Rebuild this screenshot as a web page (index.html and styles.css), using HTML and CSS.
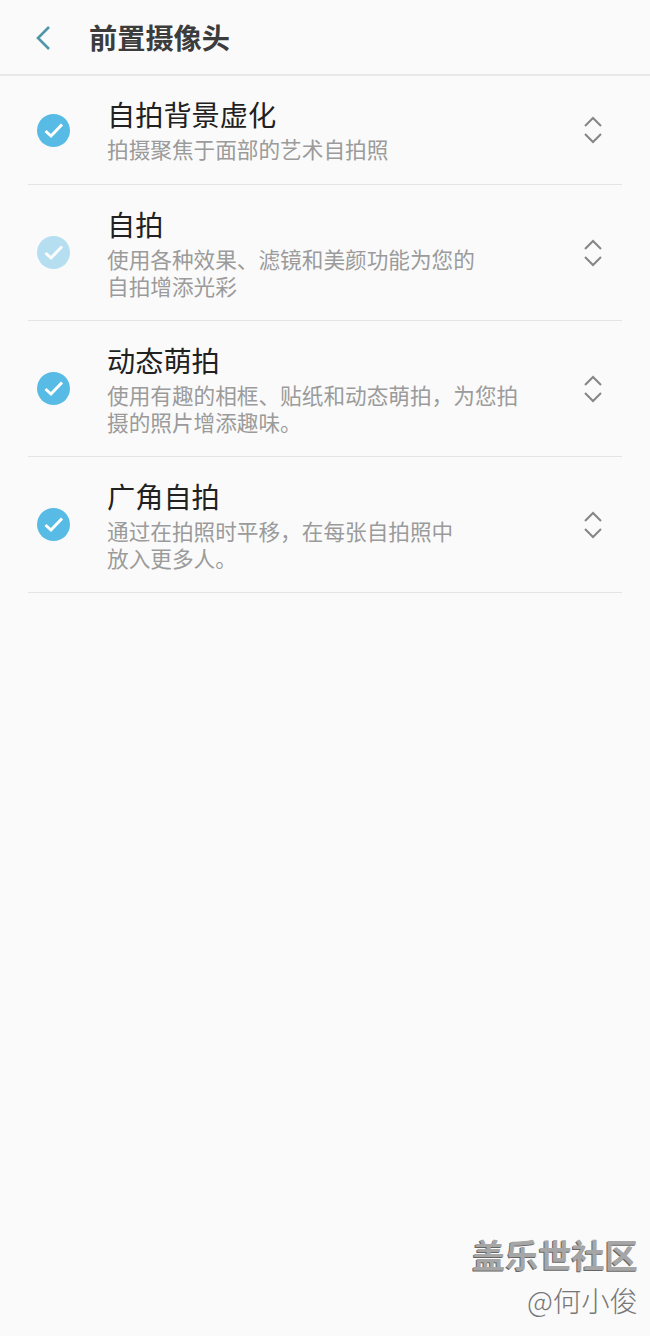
FILE: index.html
```html
<!DOCTYPE html>
<html lang="zh-CN">
<head>
    <meta charset="UTF-8">
    <meta name="viewport" content="width=device-width, initial-scale=1.0">
    <title>前置摄像头</title>
    <link rel="stylesheet" href="styles.css">
</head>
<body>
    <header class="top-bar">
        <svg class="back-icon" width="16" height="26" viewBox="0 0 16 26">
            <path d="M14 2 L3 13 L14 24" />
        </svg>
        <h1>前置摄像头</h1>
    </header>

    <ul class="mode-list">
        <li class="mode-row first">
            <svg class="check" width="33" height="33" viewBox="0 0 33 33">
                <circle cx="16.5" cy="16.5" r="16.5" />
                <path d="M8.5 17 L14 22 L25 10.5" />
            </svg>
            <div class="mode-text">
                <div class="mode-title">自拍背景虚化</div>
                <div class="mode-desc">拍摄聚焦于面部的艺术自拍照</div>
            </div>
            <svg class="reorder" width="20" height="28" viewBox="0 0 20 28">
                <path d="M2 10 L10 2 L18 10" />
                <path d="M2 18 L10 26 L18 18" />
            </svg>
        </li>
        <li class="mode-row">
            <svg class="check locked" width="33" height="33" viewBox="0 0 33 33">
                <circle cx="16.5" cy="16.5" r="16.5" />
                <path d="M8.5 17 L14 22 L25 10.5" />
            </svg>
            <div class="mode-text">
                <div class="mode-title">自拍</div>
                <div class="mode-desc">使用各种效果、滤镜和美颜功能为您的<br>自拍增添光彩</div>
            </div>
            <svg class="reorder" width="20" height="28" viewBox="0 0 20 28">
                <path d="M2 10 L10 2 L18 10" />
                <path d="M2 18 L10 26 L18 18" />
            </svg>
        </li>
        <li class="mode-row">
            <svg class="check" width="33" height="33" viewBox="0 0 33 33">
                <circle cx="16.5" cy="16.5" r="16.5" />
                <path d="M8.5 17 L14 22 L25 10.5" />
            </svg>
            <div class="mode-text">
                <div class="mode-title">动态萌拍</div>
                <div class="mode-desc">使用有趣的相框、贴纸和动态萌拍，为您拍<br>摄的照片增添趣味。</div>
            </div>
            <svg class="reorder" width="20" height="28" viewBox="0 0 20 28">
                <path d="M2 10 L10 2 L18 10" />
                <path d="M2 18 L10 26 L18 18" />
            </svg>
        </li>
        <li class="mode-row">
            <svg class="check" width="33" height="33" viewBox="0 0 33 33">
                <circle cx="16.5" cy="16.5" r="16.5" />
                <path d="M8.5 17 L14 22 L25 10.5" />
            </svg>
            <div class="mode-text">
                <div class="mode-title">广角自拍</div>
                <div class="mode-desc">通过在拍照时平移，在每张自拍照中<br>放入更多人。</div>
            </div>
            <svg class="reorder" width="20" height="28" viewBox="0 0 20 28">
                <path d="M2 10 L10 2 L18 10" />
                <path d="M2 18 L10 26 L18 18" />
            </svg>
        </li>
    </ul>

    <div class="watermark">
        <div class="watermark-site">盖乐世社区</div>
        <div class="watermark-user">@何小俊</div>
    </div>
</body>
</html>
```

FILE: styles.css
```css
* {
    box-sizing: border-box;
    margin: 0;
    padding: 0;
}

body {
    position: relative;
    height: 1336px;
    overflow: hidden;
    font-family: "Noto Sans CJK SC", "Noto Sans", sans-serif;
    background-color: #fafafa;
    color: #212121;
}

.top-bar {
    display: flex;
    align-items: center;
    height: 76px;
    padding-left: 35px;
    padding-top: 1px;
    border-bottom: 2px solid #e8e8e8;
}

.back-icon {
    margin-right: 38px;
}

.back-icon path {
    fill: none;
    stroke: #4f97a8;
    stroke-width: 2.6;
}

h1 {
    font-size: 28.2px;
    font-weight: 700;
    line-height: 1;
    color: #3c3c3c;
}

.mode-list {
    list-style: none;
    margin: 0 28px;
}

.mode-row {
    display: flex;
    align-items: center;
    height: 136px;
    padding: 0 19px 0 9px;
    border-bottom: 1px solid #e4e4e4;
}

.mode-row.first {
    height: 109px;
}

.mode-row.first .mode-text {
    padding-bottom: 3px;
}

.check {
    flex-shrink: 0;
    margin-right: 37px;
}

.check circle {
    fill: #58bbe5;
}

.check path {
    fill: none;
    stroke: #ffffff;
    stroke-width: 3;
}

.check.locked {
    opacity: 0.42;
}

.mode-text {
    flex: 1;
    padding-bottom: 2px;
}

.mode-title {
    margin-bottom: 2px;
    font-size: 28.2px;
    line-height: 38px;
    color: #212121;
}

.mode-desc {
    font-size: 21.65px;
    line-height: 27px;
    color: #9b9b9b;
}

.reorder path {
    fill: none;
    stroke: #858585;
    stroke-width: 2;
}

.watermark {
    position: absolute;
    right: 12px;
    bottom: 17px;
    text-align: right;
}

.watermark-site {
    margin-bottom: 5px;
    font-size: 33.2px;
    font-weight: 700;
    line-height: 44px;
    color: #a6a6a6;
    text-shadow: -1px 1px 0 #666666;
}

.watermark-user {
    font-size: 28.4px;
    font-weight: 300;
    line-height: 38px;
    color: #777777;
}
```
